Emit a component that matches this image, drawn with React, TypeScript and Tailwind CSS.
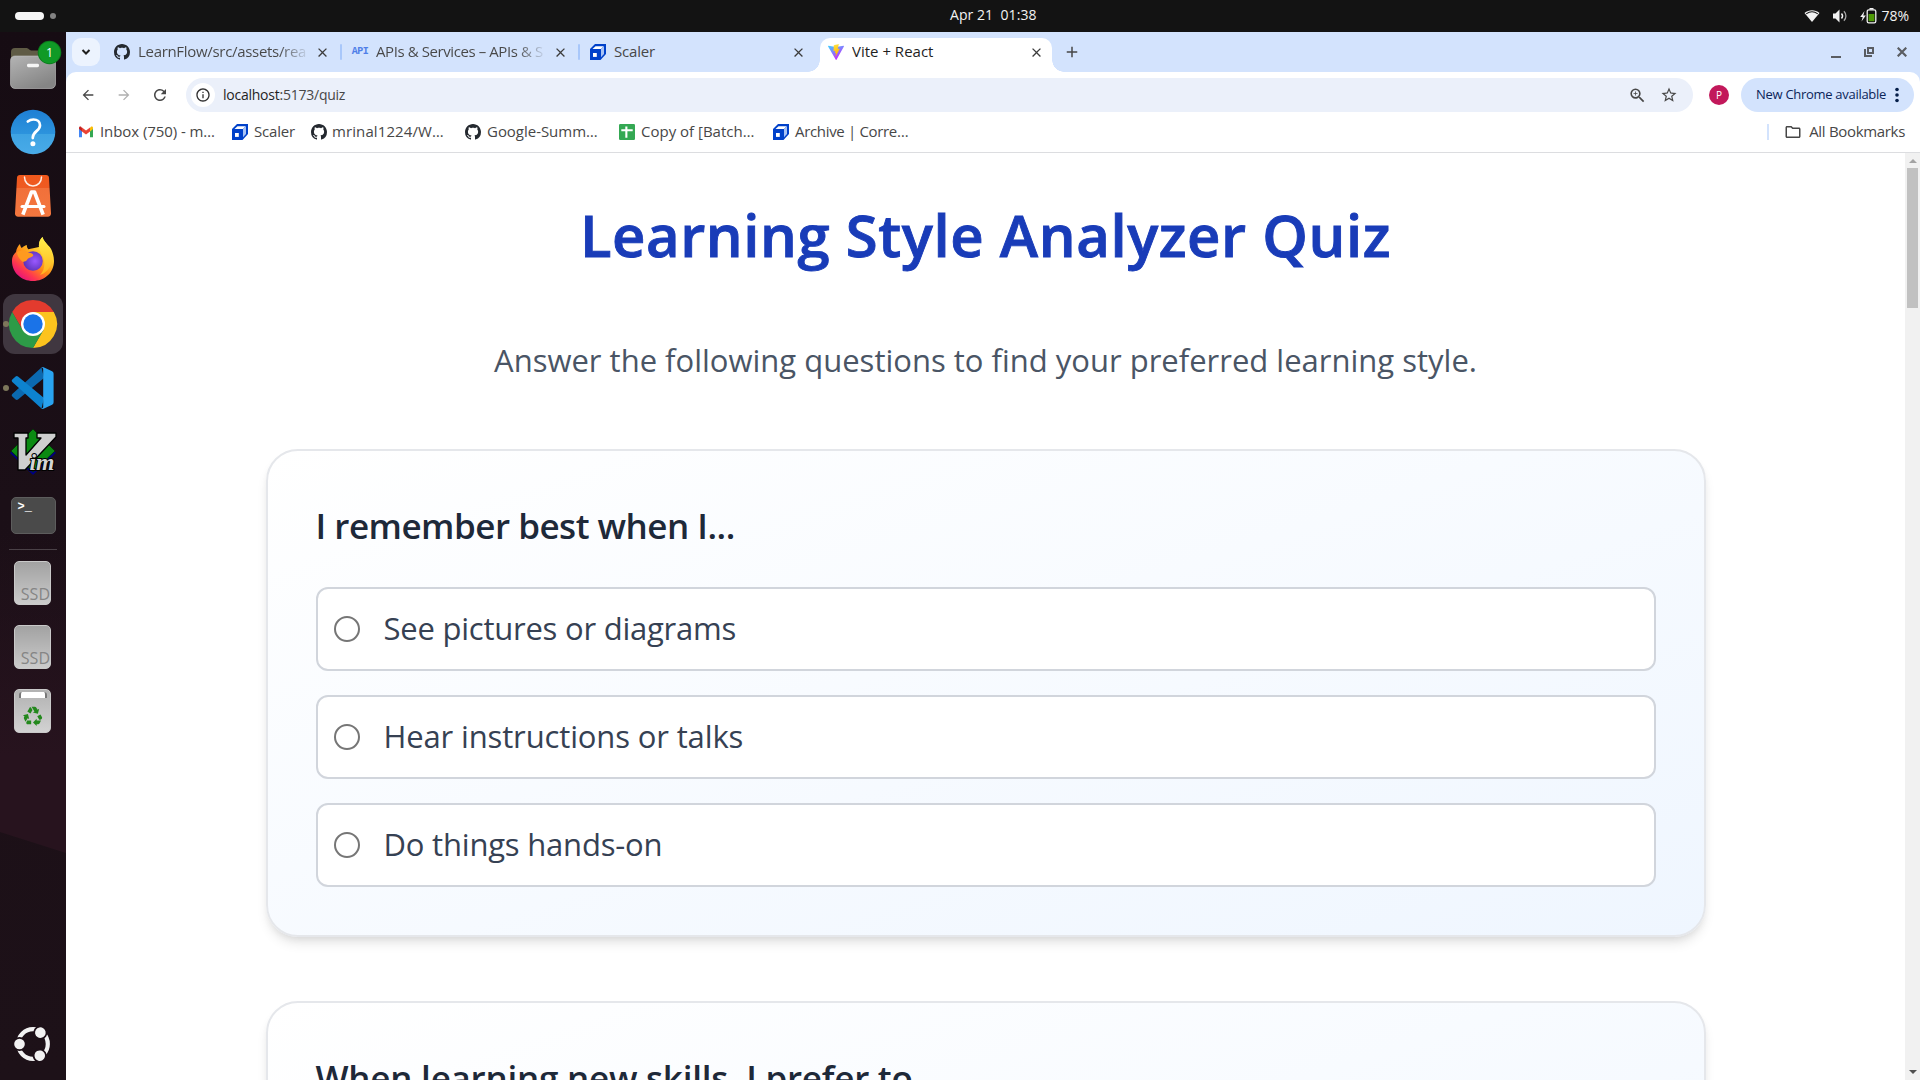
import React from "react";
import {
  MdArrowBack,
  MdArrowForward,
  MdRefresh,
  MdStarBorder,
  MdZoomIn,
  MdOutlineInfo,
  MdClose,
  MdAdd,
  MdOutlineFolder,
  MdRecycling,
} from "react-icons/md";

/* ---------- favicons ---------- */

function GithubMark() {
  return (
    <svg viewBox="0 0 16 16" className="size-4 shrink-0" fill="#24292f">
      <path d="M8 0c4.42 0 8 3.58 8 8a8.013 8.013 0 0 1-5.45 7.59c-.4.08-.55-.17-.55-.38 0-.27.01-1.13.01-2.2 0-.75-.25-1.23-.54-1.48 1.78-.2 3.65-.88 3.65-3.95 0-.88-.31-1.59-.82-2.15.08-.2.36-1.02-.08-2.12 0 0-.67-.22-2.2.82-.64-.18-1.32-.27-2-.27-.68 0-1.36.09-2 .27-1.53-1.03-2.2-.82-2.2-.82-.44 1.1-.16 1.92-.08 2.12-.51.56-.82 1.28-.82 2.15 0 3.06 1.86 3.75 3.64 3.95-.23.2-.44.55-.51 1.07-.46.21-1.61.55-2.33-.66-.15-.24-.6-.83-1.23-.82-.67.01-.27.38.01.53.34.19.73.9.82 1.13.16.45.68 1.31 2.69.94 0 .67.01 1.3.01 1.49 0 .21-.15.45-.55.38A7.995 7.995 0 0 1 0 8c0-4.42 3.58-8 8-8Z" />
    </svg>
  );
}

function ScalerMark() {
  return (
    <svg viewBox="0 0 16 16" className="size-4 shrink-0">
      <path d="M5 0H16V10L10.500 16H0V5Z" fill="#0041ca" />
      <path d="M2.500 5 5.500 2.300H13.800L11 5Z" fill="#fff" />
      <path d="M11 5V13.200L14 10V2.300Z" fill="#a9c3f5" />
      <path d="M1.500 6.500H9.200V14.800H1.500Z" fill="#0041ca" />
      <path d="M3 9H6.800V12.900H3Z" fill="#fff" />
    </svg>
  );
}

function ViteMark() {
  return (
    <svg viewBox="0 0 16 16" className="size-4 shrink-0">
      <defs>
        <linearGradient id="viteA" x1="0" y1="0" x2="0.6" y2="1">
          <stop offset="0" stopColor="#41d1ff" />
          <stop offset="0.9" stopColor="#bd34fe" />
        </linearGradient>
        <linearGradient id="viteB" x1="0.4" y1="0" x2="0.6" y2="1">
          <stop offset="0" stopColor="#ffea83" />
          <stop offset="0.1" stopColor="#ffdd35" />
          <stop offset="1" stopColor="#ffa800" />
        </linearGradient>
      </defs>
      <path d="M15.9 2.4 8.5 15.8a.4.4 0 0 1-.7 0L.1 2.4a.4.4 0 0 1 .4-.6L8 3.1l7.5-1.3a.4.4 0 0 1 .4.6Z" fill="url(#viteA)" />
      <path d="M11.5 0 6 1.100a.2.2 0 0 0-.2.2L5.500 7a.2.2 0 0 0 .3.2l1.500-.4-.4 2.200c0 .2.100.3.200.2l1-.3-.7 3.500c0 .2.2.3.300.1L11.600 4.900a.2.2 0 0 0-.2-.3l-1.600.3.900-4.400Z" fill="url(#viteB)" />
    </svg>
  );
}

function ApiMark() {
  return (
    <span className="flex w-4 shrink-0 justify-center font-['Liberation_Mono'] text-[10px] leading-4 font-bold tracking-[-0.5px] text-[#4f7fe8]">
      API
    </span>
  );
}

function GmailMark() {
  return (
    <svg viewBox="0 0 16 16" className="size-4 shrink-0">
      <path d="M1 4v9.200h3V7.200L1 4.600Z" fill="#4285f4" />
      <path d="M12 13.200h3V4.600L12 7.200Z" fill="#34a853" />
      <path d="M12 3.700v3.700l3-2.300V4c0-1.300-1.400-1.800-2.300-1.100Z" fill="#fbbc04" />
      <path d="M1 5.100 4 7.400V3.700l-.7-.8C2.400 2.200 1 2.700 1 4Z" fill="#c5221f" />
      <path d="M4 3.600v3.800l4 3 4-3V3.600L8 6.600Z" fill="#ea4335" />
    </svg>
  );
}

function SheetsMark() {
  return (
    <svg viewBox="0 0 16 16" className="size-4 shrink-0">
      <rect width="16" height="16" rx="1.200" fill="#34a853" />
      <path d="M2.300 5.200H13.700V7.200H8.400V13.700H6.300V7.200H2.300Z M6.300 2.500H8.400V6H6.300Z" fill="#fff" />
    </svg>
  );
}

/* ---------- dock icons ---------- */

function FilesIcon() {
  return (
    <svg viewBox="0 0 60 60" className="size-[60px]">
      <defs>
        <linearGradient id="folder" x1="0" y1="0" x2="0.6" y2="1">
          <stop offset="0" stopColor="#b4b4b4" />
          <stop offset="1" stopColor="#858585" />
        </linearGradient>
      </defs>
      <path d="M8 30V14a4 4 0 0 1 4-4h11c3 0 3 2.500 6 2.500h19a4 4 0 0 1 4 4V30Z" fill="#5f5b45" />
      <rect x="7.500" y="18" width="45" height="32.500" rx="4.500" fill="url(#folder)" stroke="#c4c4c4" strokeWidth="0.6" />
      <rect x="24" y="25.800" width="12" height="3.400" rx="1.400" fill="#f6f6f6" />
      <circle cx="46.500" cy="14.500" r="11.800" fill="#0b7a1c" />
      <circle cx="46.500" cy="14.500" r="10.800" fill="#109a26" />
      <text x="46.500" y="19" textAnchor="middle" fontFamily="Open Sans" fontSize="12.500" fill="#fff">
        1
      </text>
    </svg>
  );
}

function HelpIcon() {
  return (
    <svg viewBox="0 0 60 60" className="size-[60px]">
      <defs>
        <linearGradient id="help" x1="0" y1="0" x2="0" y2="1">
          <stop offset="0" stopColor="#1f7fd4" />
          <stop offset="0.54" stopColor="#2c93dd" />
          <stop offset="0.55" stopColor="#3ea3e3" />
          <stop offset="1" stopColor="#49abe8" />
        </linearGradient>
      </defs>
      <circle cx="30" cy="30" r="22.300" fill="url(#help)" />
      <path d="M24.800 19.500c1.600-1.300 3.400-2 5.600-2 3.900 0 6.600 2.100 6.600 5.700 0 5.700-7.200 6.200-7.200 12.300v.6" fill="none" stroke="#fff" strokeWidth="2.700" strokeLinecap="round" />
      <circle cx="29.900" cy="41.800" r="2.500" fill="#fff" />
    </svg>
  );
}

function AppCenterIcon() {
  return (
    <svg viewBox="0 0 60 60" className="size-[60px]">
      <defs>
        <linearGradient id="bag" x1="0" y1="0" x2="0" y2="1">
          <stop offset="0" stopColor="#f0581c" />
          <stop offset="0.3" stopColor="#ee5a22" />
          <stop offset="0.31" stopColor="#f1703a" />
          <stop offset="1" stopColor="#f4773f" />
        </linearGradient>
      </defs>
      <path d="M17 9h26a3 3 0 0 1 3 2.800l2 35.400a3.200 3.200 0 0 1-3.200 3.600H15.200a3.200 3.200 0 0 1-3.200-3.600l2-35.400A3 3 0 0 1 17 9Z" fill="url(#bag)" />
      <path d="M21.500 11c0 5 3.600 9 8.500 9s8.500-4 8.500-9" fill="none" stroke="#fdeee6" strokeWidth="1.500" strokeLinecap="round" />
      <path d="M20.500 47 28.500 26h3L39.500 47" fill="none" stroke="#fff" strokeWidth="3.600" strokeLinecap="square" strokeLinejoin="round" />
      <path d="M19 40.500h22" stroke="#fff" strokeWidth="3" strokeLinecap="round" />
    </svg>
  );
}

function FirefoxIcon() {
  return (
    <svg viewBox="0 0 60 60" className="size-[60px]">
      <defs>
        <linearGradient id="ffA" x1="0.85" y1="0.1" x2="0.2" y2="0.95">
          <stop offset="0" stopColor="#fff44f" />
          <stop offset="0.3" stopColor="#ffc52b" />
          <stop offset="0.55" stopColor="#ff8a16" />
          <stop offset="0.8" stopColor="#ff3750" />
          <stop offset="1" stopColor="#e5127d" />
        </linearGradient>
        <radialGradient id="ffB" cx="0.6" cy="0.5" r="0.6">
          <stop offset="0" stopColor="#9a59ff" />
          <stop offset="1" stopColor="#5a30b5" />
        </radialGradient>
        <linearGradient id="ffC" x1="0" y1="0" x2="0" y2="1">
          <stop offset="0" stopColor="#fff04a" />
          <stop offset="1" stopColor="#ffb21e" />
        </linearGradient>
      </defs>
      <path d="M13 22c.5-3.500 2-6 4-8 .2 1.800.8 3 1.800 4 1.300-1.500 3-2.500 5-3 0 2 .5 3 1.500 4.200L36 17c-.5-3.800.8-7.500 3.500-10 .8 3.800 3.500 5.500 5.500 8.500 3 1.500 6 9 6 15.500 0 11.500-9.300 20-21 20S9 42.500 9 31c0-3.500 1.200-6.500 4-9Z" fill="url(#ffA)" />
      <path d="M36 17c-.5-3.800.8-7.500 3.500-10 .8 3.800 3.500 5.500 5.500 8.500 4 5 5.500 12 3 19-2 5-6 9-11 10.500 4-4 5-9 4-15-1-5-4.500-8-5-13Z" fill="url(#ffC)" />
      <circle cx="30" cy="31" r="9.800" fill="url(#ffB)" />
      <path d="M14 22c4-2 8-2.200 11 .5 2.500.3 5 1 5.300 2.700-.5 2-4.800 2.300-6 4.300-.8 1.500-2.300 2-4.300 2.500-3-2-6-6-6-10Z" fill="#ff9a1f" />
    </svg>
  );
}

function ChromeIcon() {
  return (
    <svg viewBox="-30 -30 60 60" className="size-[60px]">
      <path d="M-20.800-12A24 24 0 0 1 20.800-12H0L-10.400 6Z" fill="#e33b2e" />
      <path d="M20.800-12A24 24 0 0 1 0 24L10.400 6 0-12Z" fill="#fcc31e" />
      <path d="M0 24A24 24 0 0 1-20.800-12L-10.400 6H10.400Z" fill="#2d9b47" />
      <circle r="12" fill="#fff" />
      <circle r="9.700" fill="#1a73e8" />
    </svg>
  );
}

function CodeIcon() {
  return (
    <svg viewBox="0 0 60 60" className="size-[60px]">
      <path d="M9.300 38.500a1.600 1.600 0 0 1 0-2.400L38.500 9.500 41 20 15 41.500a2 2 0 0 1-2.400 0Z" fill="#0b69b0" />
      <path d="M9.300 21.500a1.600 1.600 0 0 0 0 2.400L38.500 50.500 41 40 15 18.500a2 2 0 0 0-2.400 0Z" fill="#0d83cf" />
      <path d="M40.500 50.800a3 3 0 0 1-3-.8c1 .9 2.700.3 2.700-1.200V11.200c0-1.500-1.700-2.100-2.700-1.200a3 3 0 0 1 3-.8l8.600 4.100A2.600 2.600 0 0 1 50.600 15.700V44.300a2.600 2.600 0 0 1-1.500 2.400Z" fill="#29a3f0" />
    </svg>
  );
}

function VimIcon() {
  return (
    <svg viewBox="0 0 60 60" className="size-[60px]">
      <path d="M30 8 53 31 30 53 7 31Z" fill="#00007c" />
      <path d="M30 7 52 29 30 50 8 29Z" fill="#0b8a12" stroke="#062b06" strokeWidth="0.800" />
      <path d="M11 11H25V16H23V33L38 16H34V11H53V15L22 48H15V16H11Z" fill="#cfcfcf" stroke="#000" strokeWidth="1.300" strokeLinejoin="round" />
      <text x="26.500" y="47.500" fontFamily="Liberation Serif" fontWeight="700" fontStyle="italic" fontSize="23" textLength="25" lengthAdjust="spacingAndGlyphs" fill="#d4d4d4" stroke="#000" strokeWidth="2" paintOrder="stroke">
        im
      </text>
    </svg>
  );
}

function TerminalIcon() {
  return (
    <span className="-mt-px flex h-[37px] w-[45px] rounded-[5px] border border-[#5d5d5d] bg-[#4a4a4a] pt-px pl-1.5 font-['Liberation_Mono'] text-[12px] leading-4 font-bold text-white">
      &gt;_
    </span>
  );
}

function DriveIcon() {
  return (
    <span className="mr-px flex h-[44px] w-[37px] items-end justify-end overflow-hidden rounded-[5px] border border-[#c9c9c9] bg-linear-to-b from-[#a2a2a2] to-[#cbcbcb] pb-px font-['Open_Sans'] text-[16px] leading-[18px] text-[#858585]">
      SSD
    </span>
  );
}

function TrashIcon() {
  return (
    <span className="mr-px flex h-[44px] w-[37px] flex-col items-center rounded-[5px] border border-[#c9c9c9] bg-linear-to-b from-[#b2b2b2] to-[#d2d2d2] pt-0.5">
      <span className="h-[6px] w-7 rounded-t-[3px] border-x-2 border-x-[#777] bg-white" />
      <MdRecycling className="mt-[7px] size-[22px] text-[#23881c]" />
    </span>
  );
}

function UbuntuIcon() {
  return (
    <svg viewBox="-30 -30 60 60" className="size-[60px]">
      <circle r="14.800" fill="none" stroke="#f2f2f2" strokeWidth="4.200" />
      {["rotate(180)", "rotate(-57)", "rotate(60)"].map((turn) => (
        <g key={turn} transform={turn}>
          <circle cx="13.500" r="7" fill="#1d1018" />
          <circle cx="13.500" r="5.300" fill="#f2f2f2" />
        </g>
      ))}
    </svg>
  );
}

function DockSlot({ children, active, running }: { children: React.ReactNode; active?: boolean; running?: boolean }) {
  return (
    <div className={active ? "relative flex size-[60px] items-center justify-center rounded-[12px] bg-[#403740]" : "relative flex size-[60px] items-center justify-center"}>
      {running && <span className="absolute top-[27px] left-0 size-[6px] rounded-full bg-[#7d775b]" />}
      {children}
    </div>
  );
}

function Dock() {
  return (
    <aside className="relative flex w-[66px] shrink-0 flex-col items-center gap-1 bg-linear-to-b from-[#160c13] via-[#1b0f17] via-45% to-[#1d1118] pt-1.5 pb-1.5">
      <svg viewBox="0 0 66 1048" className="absolute inset-0 h-full w-full">
        <defs>
          <linearGradient id="dusk" x1="0" y1="0" x2="0" y2="1">
            <stop offset="0" stopColor="#27131e" stopOpacity="0" />
            <stop offset="0.700" stopColor="#27131e" />
          </linearGradient>
        </defs>
        <path d="M0 500H66V821L0 800Z" fill="url(#dusk)" />
      </svg>
      <DockSlot><FilesIcon /></DockSlot>
      <DockSlot><HelpIcon /></DockSlot>
      <DockSlot><AppCenterIcon /></DockSlot>
      <DockSlot><FirefoxIcon /></DockSlot>
      <DockSlot active running><ChromeIcon /></DockSlot>
      <DockSlot running><CodeIcon /></DockSlot>
      <DockSlot><VimIcon /></DockSlot>
      <DockSlot><TerminalIcon /></DockSlot>
      <div className="relative -my-px h-px w-12 bg-[#4a4147]" />
      <DockSlot><DriveIcon /></DockSlot>
      <DockSlot><DriveIcon /></DockSlot>
      <DockSlot><TrashIcon /></DockSlot>
      <div className="mt-auto"><DockSlot><UbuntuIcon /></DockSlot></div>
    </aside>
  );
}

/* ---------- system bar ---------- */

function SystemBar() {
  return (
    <header className="flex h-8 shrink-0 items-center bg-[#131313] text-[15px] leading-8 text-[#f2f2f2]">
      <div className="flex w-[950px] items-center gap-[6px] pl-[15px]">
        <span className="h-2 w-[29px] rounded-full bg-[#f6f6f6]" />
        <span className="size-[6px] rounded-full bg-[#828282]" />
      </div>
      <span className="-mt-0.5 text-[14px] tracking-[0.06px] whitespace-pre">Apr 21  01:38</span>
      <div className="ml-auto flex items-center pr-[11px]">
        <svg viewBox="0 0 16 16" className="size-4">
          <path d="M.5 5C5 1.200 11 1.200 15.500 5L8 14Z" fill="#f2f2f2" />
          <path d="M2.200 5.900C5.700 3.300 10.300 3.300 13.800 5.900" fill="none" stroke="#131313" strokeWidth="1.100" />
        </svg>
        <svg viewBox="0 0 16 16" className="ml-3 size-4">
          <path d="M1 5.500h2.500L7.500 1.500v13L3.500 10.500H1Z" fill="#f2f2f2" />
          <path d="M9.500 5.500c1.300 1.500 1.300 3.500 0 5" fill="none" stroke="#f2f2f2" strokeWidth="1.400" />
          <path d="M11.900 3.300c2.700 2.700 2.700 6.700 0 9.400" fill="none" stroke="#a5a5a5" strokeWidth="1.300" />
        </svg>
        <svg viewBox="0 0 17 16" className="ml-3 h-4 w-[17px]">
          <path d="M4.500 3 .2 9h2.500L1.500 13.500 5.800 7.500H3.300Z" fill="#f2f2f2" />
          <rect x="7.200" y="1.800" width="8.600" height="13" rx="1.600" fill="none" stroke="#f2f2f2" strokeWidth="1.300" />
          <rect x="9.500" y="0" width="4" height="1.500" fill="#f2f2f2" />
          <rect x="8.600" y="6" width="5.800" height="7.200" fill="#4e9a06" />
        </svg>
        <span className="ml-[4px] text-[14px]">78%</span>
      </div>
    </header>
  );
}

/* ---------- browser chrome ---------- */

function Tab({ icon, active, children }: { icon: React.ReactNode; active?: boolean; children: React.ReactNode }) {
  return (
    <div className={active ? "relative flex h-[34px] w-[232px] items-center rounded-t-[10px] bg-white pb-1.5 pl-2 text-[#1f1f1f]" : "flex h-[34px] w-[232px] items-center pb-1.5 pl-2 text-[#474747]"}>
      {active && (
        <>
          <span className="absolute bottom-0 -left-3 size-3 bg-[radial-gradient(circle_at_0_0,transparent_11.500px,white_12px)]" />
          <span className="absolute -right-3 bottom-0 size-3 bg-[radial-gradient(circle_at_100%_0,transparent_11.500px,white_12px)]" />
        </>
      )}
      {icon}
      <span className="-mt-0.5 ml-2 w-[168px] overflow-hidden text-[15px] leading-6 whitespace-nowrap">{children}</span>
      <MdClose className="ml-[8.5px] size-[15px] text-[#3c3c3c]" />
    </div>
  );
}

function TabDivider({ hidden }: { hidden?: boolean }) {
  return (
    <div className="flex h-[34px] w-1.5 items-center justify-center pb-1.5">
      <span className={hidden ? "h-4 w-0.5" : "h-4 w-0.5 rounded-full bg-[#a8c7fa]"} />
    </div>
  );
}

function TabStrip() {
  return (
    <div className="flex h-10 shrink-0 items-start bg-[#d3e3fd] pt-1.5 pl-1.5">
      <div className="mr-1.5 flex size-7 items-center justify-center rounded-[9px] bg-[#ecf3fe]">
        <svg viewBox="0 0 10 10" className="size-[10px]">
          <path d="M1.500 3 5 6.500 8.500 3" fill="none" stroke="#1f1f1f" strokeWidth="2" />
        </svg>
      </div>
      <Tab icon={<GithubMark />}>
        <span className="bg-linear-to-r from-[#474747] from-84% to-[#47474722] bg-clip-text tracking-[-0.31px] text-transparent">LearnFlow/src/assets/rea</span>
      </Tab>
      <TabDivider />
      <Tab icon={<ApiMark />}>
        <span className="bg-linear-to-r from-[#474747] from-84% to-[#47474722] bg-clip-text tracking-[-0.41px] text-transparent">APIs &amp; Services – APIs &amp; S</span>
      </Tab>
      <TabDivider />
      <Tab icon={<ScalerMark />}><span className="tracking-[-0.19px]">Scaler</span></Tab>
      <TabDivider hidden />
      <Tab icon={<ViteMark />} active>Vite + React</Tab>
      <div className="flex h-7 w-10 items-center justify-center">
        <MdAdd className="size-[18px] text-[#474747]" />
      </div>
      <div className="ml-auto flex h-7 items-center gap-[22px] pr-[13px]">
        <span className="mt-[9px] mr-px h-0.5 w-[10px] bg-[#5a5d62]" />
        <svg viewBox="0 0 10 10" className="mr-px size-[10px]">
          <path d="M4 1H9V6H4Z" fill="none" stroke="#5a5d62" strokeWidth="2" />
          <path d="M1 2V9H8" fill="none" stroke="#5a5d62" strokeWidth="2" />
        </svg>
        <svg viewBox="0 0 10 10" className="size-[10px]">
          <path d="M.7.7 9.300 9.300M9.300.7.7 9.300" stroke="#5a5d62" strokeWidth="2.200" />
        </svg>
      </div>
    </div>
  );
}

function Toolbar() {
  return (
    <div className="bg-[#d3e3fd]">
      <div className="flex h-[46px] items-start rounded-t-[10px] bg-white pt-1.5">
        <div className="flex h-[34px] items-center pl-[14px]">
          <MdArrowBack className="size-4 text-[#474747]" />
          <MdArrowForward className="ml-5 size-4 text-[#b0b0b0]" />
          <MdRefresh className="ml-[19px] size-[18px] text-[#474747]" />
        </div>
        <div className="ml-[17px] flex h-[34px] w-[1507px] items-center rounded-full bg-[#ebf0fa] pl-[5px]">
          <span className="flex size-6 items-center justify-center rounded-full bg-white">
            <MdOutlineInfo className="size-4 text-[#303030]" />
          </span>
          <span className="ml-[8px] text-[14px] leading-6 tracking-[-0.24px] text-[#474747]">
            <span className="text-[#1f1f1f]">localhost</span>:5173/quiz
          </span>
          <MdZoomIn className="ml-auto size-[19px] text-[#474747]" />
          <MdStarBorder className="mr-[15px] ml-[13px] size-[18px] text-[#474747]" />
        </div>
        <div className="mt-[7px] ml-4 flex size-5 items-center justify-center rounded-full bg-[#c2185b] text-[10px] text-white">P</div>
        <div className="ml-3 flex h-[34px] w-[173px] items-center rounded-full bg-[#d3e3fd] pl-[15px] text-[#0b2559]">
          <span className="w-[130px] text-[13px] tracking-[-0.29px] whitespace-nowrap">New Chrome available</span>
          <svg viewBox="0 0 4 16" className="ml-[9px] h-4 w-1" fill="#041e49">
            <circle cx="2" cy="2.500" r="1.800" />
            <circle cx="2" cy="8" r="1.800" />
            <circle cx="2" cy="13.500" r="1.800" />
          </svg>
        </div>
      </div>
    </div>
  );
}

function BookmarksBar() {
  return (
    <div className="flex h-[35px] shrink-0 border-b border-[#dcdde0] bg-white pb-[6px] pl-3 text-[15px] leading-7 text-[#474747]">
      <div className="flex w-[154px] items-center gap-1.5"><GmailMark /><span className="-mt-0.5 tracking-[-0.07px]">Inbox (750) - m…</span></div>
      <div className="flex w-[79px] items-center gap-1.5"><ScalerMark /><span className="-mt-0.5 tracking-[-0.19px]">Scaler</span></div>
      <div className="flex w-[154px] items-center gap-[5px]"><GithubMark /><span className="-mt-0.5 tracking-[0.1px]">mrinal1224/W…</span></div>
      <div className="flex w-[154px] items-center gap-1.5"><GithubMark /><span className="-mt-0.5 tracking-[-0.03px]">Google-Summ…</span></div>
      <div className="flex w-[154px] items-center gap-1.5"><SheetsMark /><span className="-mt-0.5">Copy of [Batch…</span></div>
      <div className="flex items-center gap-1.5"><ScalerMark /><span className="-mt-0.5 tracking-[-0.33px]">Archive | Corre…</span></div>
      <div className="ml-auto flex items-center pr-[15px]">
        <span className="mr-[15px] h-4 w-0.5 bg-[#d3e3fd]" />
        <MdOutlineFolder className="mr-[7px] size-[18px]" />
        <span className="-mt-0.5 tracking-[-0.32px]">All Bookmarks</span>
      </div>
    </div>
  );
}

/* ---------- quiz page ---------- */

function Option({ children }: { children: React.ReactNode }) {
  return (
    <label className="flex h-[84px] items-center gap-6 rounded-[12px] border-2 border-[#d1d5dc] bg-white pl-4 text-[31px] leading-[48px] text-[#364153]">
      <span className="size-[26px] rounded-full border-2 border-[#767676] bg-white" />
      {children}
    </label>
  );
}

function QuestionCard({ title, children }: { title: React.ReactNode; children?: React.ReactNode }) {
  return (
    <section className="min-h-[488px] shrink-0 rounded-[32px] border-2 border-[#e5e7eb] bg-linear-to-br from-white to-[#eff6ff] p-12 shadow-[0_8px_12px_-2px_rgba(0,0,0,0.1),0_4px_8px_-4px_rgba(0,0,0,0.1)]">
      <h2 className="mb-[35px] text-[35px] leading-[53px] font-semibold text-[#1e2939]">{title}</h2>
      <div className="flex flex-col gap-6">{children}</div>
    </section>
  );
}

function Quiz() {
  return (
    <main className="flex min-w-0 flex-1 flex-col items-center overflow-hidden bg-white pt-[46px]">
      <h1 className="text-[58px] leading-[72px] font-semibold tracking-[0.58px] text-[#193cb8] [-webkit-text-stroke:0.9px_#193cb8]">Learning Style Analyzer Quiz</h1>
      <p className="mt-[61px] text-[31px] leading-[56px] text-[#4a5565]">Answer the following questions to find your preferred learning style.</p>
      <div className="mt-[61px] flex w-[1440px] flex-col gap-16">
        <QuestionCard title={<span className="tracking-[-0.5px]">I remember best when I...</span>}>
          <Option><span className="-mt-0.5 tracking-[-0.23px]">See pictures or diagrams</span></Option>
          <Option><span className="-mt-0.5 tracking-[-0.14px]">Hear instructions or talks</span></Option>
          <Option><span className="-mt-0.5 tracking-[-0.2px]">Do things hands-on</span></Option>
        </QuestionCard>
        <QuestionCard title={<span className="tracking-[-0.24px]">When learning new skills, I prefer to</span>} />
      </div>
    </main>
  );
}

function Scrollbar() {
  return (
    <div className="flex w-[15px] shrink-0 flex-col items-center bg-[#f1f1f1] pb-[6px]">
      <svg viewBox="0 0 8 4" className="mt-[6px] mb-[5px] h-1 w-2" fill="#a3a3a3"><path d="M4 0 8 4H0Z" /></svg>
      <span className="h-[140px] w-[11px] bg-[#c1c1c1]" />
      <svg viewBox="0 0 8 4" className="mt-auto h-1 w-2" fill="#505050"><path d="M0 0H8L4 4Z" /></svg>
    </div>
  );
}

export default function App() {
  return (
    <div className="flex h-[1080px] w-[1920px] flex-col overflow-hidden bg-white font-['Open_Sans',sans-serif]">
      <SystemBar />
      <div className="flex min-h-0 flex-1">
        <Dock />
        <div className="flex min-w-0 flex-1 flex-col">
          <TabStrip />
          <Toolbar />
          <BookmarksBar />
          <div className="flex min-h-0 flex-1">
            <Quiz />
            <Scrollbar />
          </div>
        </div>
      </div>
    </div>
  );
}
